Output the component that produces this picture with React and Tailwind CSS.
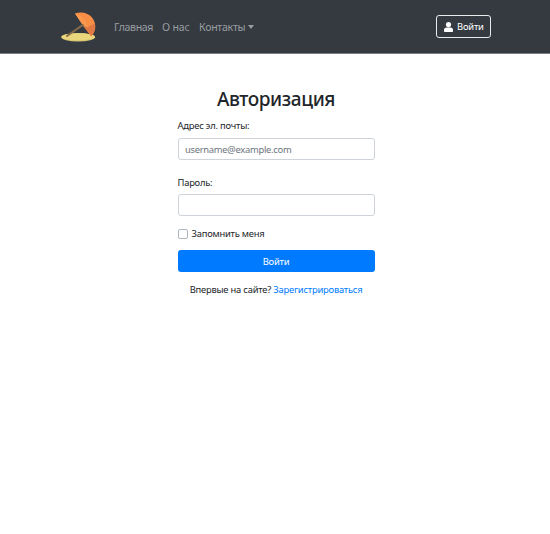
import React from "react";

function UmbrellaLogo() {
  return (
    <svg width="36" height="31" viewBox="0 0 36 31" className="block shrink-0">
      <ellipse cx="17.2" cy="26.3" rx="17" ry="4.2" fill="#d9c674" />
      <ellipse cx="17.2" cy="25.7" rx="16.7" ry="3.5" fill="#ead67d" />
      <path d="M14 2.500C20 .2 27.500 1.600 31.400 7c4.200 5.700 3.800 13-1 18.500L21.800 14.200Z" fill="#f98f47" />
      <path d="M26.500 16.200 33.600 12.600c.9 4.700-.2 9.200-3.200 12.900l-8.600-11.300c1.700.1 3.300.6 4.700 2Z" fill="#e07843" />
      <path d="M14 2.500C20 4 24.500 9 26.500 16.200l-4.700-2C19.300 10.500 17 6.500 14 2.500Z" fill="#fb9a4e" />
      <path d="M6 25 21.800 13.900" stroke="#836b4c" strokeWidth="2" strokeLinecap="round" />
    </svg>
  );
}

function UserIcon() {
  return (
    <svg width="9" height="10" viewBox="0 0 9 10" fill="#fff" className="block shrink-0">
      <circle cx="4.5" cy="2.6" r="2.6" />
      <path d="M2.6 5.600h3.800C8 5.600 9 6.600 9 8v1c0 .6-.4 1-1 1H1c-.6 0-1-.4-1-1V8c0-1.400 1-2.400 2.600-2.400Z" />
    </svg>
  );
}

export default function App() {
  return (
    <div className="min-h-[534px] bg-white font-['Noto_Sans','Open_Sans',sans-serif] text-[9.400px] leading-[14px] tracking-[-0.22px] text-[#212529]">
      <header className="flex h-[54px] items-center border-b border-[#7b7f83] bg-[#343a40] pl-[61px] pr-[59px]">
        <UmbrellaLogo />
        <nav className="ml-[17px] flex items-center gap-[9px] whitespace-nowrap text-[10.600px] leading-[16px] tracking-[-0.38px] text-[#9a9da0]">
          <a className="w-[39px]">Главная</a>
          <a className="w-[28px] tracking-[-0.2px]">О нас</a>
          <a className="flex items-center gap-[3px]">
            <span className="w-[46px] tracking-[-0.28px]">Контакты</span>
            <span className="border-x-[3.500px] border-t-[4px] border-x-transparent border-t-current" />
          </a>
        </nav>
        <button className="ml-auto flex h-[23px] w-[55px] items-center gap-[4px] rounded-[3px] border border-[#e9eaeb] pl-[7px] text-white">
          <UserIcon />
          <span className="tracking-[-0.2px]">Войти</span>
        </button>
      </header>
      <main className="mx-auto flex w-[197px] translate-x-px flex-col pt-[33px]">
        <h1 className="whitespace-nowrap text-center text-[19px] font-medium leading-[24px] tracking-[-0.4px]">Авторизация</h1>
        <label className="mt-[8px]">Адрес эл. почты:</label>
        <input
          className="mt-[5px] h-[22px] rounded-[3px] border border-[#ced4da] px-[6.500px] pt-px tracking-[-0.28px] placeholder:text-[#6c757d] placeholder:opacity-100"
          placeholder="username@example.com"
        />
        <label className="mt-[16px]">Пароль:</label>
        <input type="password" className="mt-[4px] h-[22px] rounded-[3px] border border-[#ced4da] px-[7px]" />
        <label className="mt-[10px] flex items-center gap-[4px]">
          <span className="h-[10px] w-[10px] rounded-[2px] border border-[#adb5bd] bg-white" />
          <span className="pt-px">Запомнить меня</span>
        </label>
        <button className="mt-[9px] h-[22px] rounded-[3px] bg-[#007bff] pt-px text-white">Войти</button>
        <p className="mt-[11px] whitespace-nowrap text-center">
          Впервые на сайте? <a className="text-[#007bff]">Зарегистрироваться</a>
        </p>
      </main>
    </div>
  );
}
